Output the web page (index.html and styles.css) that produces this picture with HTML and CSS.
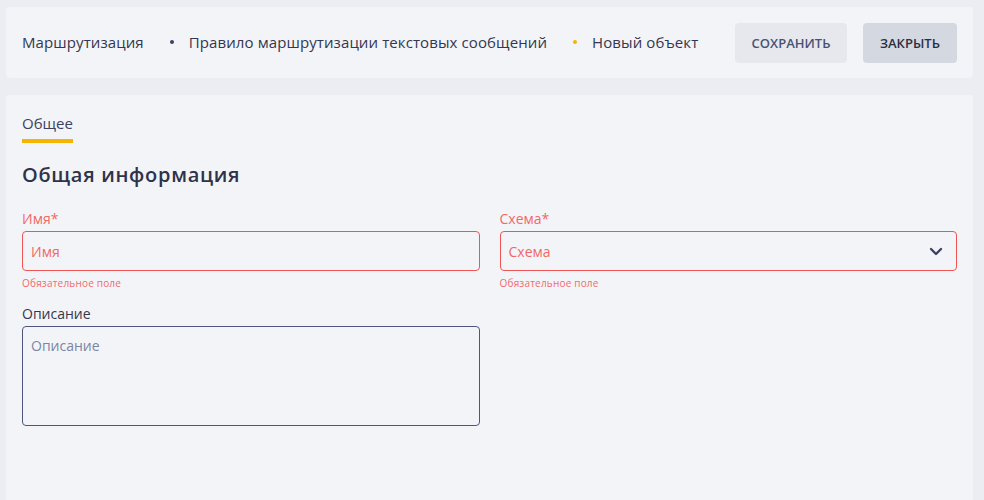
FILE: index.html
```html
<!DOCTYPE html>
<html lang="ru">
<head>
    <meta charset="UTF-8">
    <meta name="viewport" content="width=device-width, initial-scale=1.0">
    <title>Новый объект</title>
    <link rel="stylesheet" href="styles.css">
</head>
<body>
    <!-- ШАПКА -->
    <div class="header">
        <div class="crumbs">
            <span class="crumb">Маршрутизация</span>
            <span class="dot"></span>
            <span class="crumb">Правило маршрутизации текстовых сообщений</span>
            <span class="dot dot-new"></span>
            <span class="crumb">Новый объект</span>
        </div>
        <div class="actions">
            <button class="btn btn-save">СОХРАНИТЬ</button>
            <button class="btn btn-close">ЗАКРЫТЬ</button>
        </div>
    </div>

    <!-- ФОРМА -->
    <div class="card">
        <div class="tabs">
            <span class="tab active">Общее</span>
        </div>

        <h2 class="section-title">Общая информация</h2>

        <div class="grid">
            <div class="field invalid">
                <label class="label">Имя*</label>
                <input class="input" type="text" placeholder="Имя">
                <div class="hint">Обязательное поле</div>
            </div>
            <div class="field invalid">
                <label class="label">Схема*</label>
                <div class="select">
                    <span>Схема</span>
                    <svg class="chevron" width="14" height="9" viewBox="0 0 14 9">
                        <path d="M2 2l5 5 5-5" fill="none" stroke="#3d4160" stroke-width="2.4" stroke-linecap="round" stroke-linejoin="round"/>
                    </svg>
                </div>
                <div class="hint">Обязательное поле</div>
            </div>
            <div class="field">
                <label class="label">Описание</label>
                <textarea class="textarea" placeholder="Описание"></textarea>
            </div>
        </div>
    </div>
</body>
</html>
```

FILE: styles.css
```css
/* ОБЩЕЕ */
body {
    margin: 0;
    padding: 7px 11px 0 6px;
    background-color: #ecedf2;
    font-family: 'Open Sans', 'Noto Sans', sans-serif;
    color: #2f3248;
    height: 100vh;
    box-sizing: border-box;
    overflow: hidden;
}

/* ШАПКА */
.header {
    height: 71px;
    background-color: #f3f4f8;
    border-radius: 4px;
    display: flex;
    align-items: center;
    justify-content: space-between;
    padding: 0 16px;
}

.crumbs {
    display: flex;
    align-items: center;
    font-size: 15px;
    letter-spacing: 0.1px;
    color: #33374f;
    margin-top: -1px;
}

.dot {
    width: 4px;
    height: 4px;
    border-radius: 50%;
    background-color: #3d4160;
    margin: 0 15px 0 26px;
}

.dot-new {
    background-color: #f5b400;
}

.actions {
    display: flex;
    gap: 16px;
}

.btn {
    height: 40px;
    border: none;
    border-radius: 4px;
    font-family: inherit;
    font-size: 13px;
    font-weight: 600;
    padding: 0 16px;
    cursor: pointer;
}

.btn-save {
    width: 112px;
    background-color: #e6e8ed;
    color: #4a5274;
}

.btn-close {
    width: 94px;
    background-color: #d4d8e1;
    color: #2b2f45;
}

/* КАРТОЧКА */
.card {
    margin-top: 17px;
    height: 420px;
    background-color: #f3f4f8;
    border-radius: 4px 4px 0 0;
    padding: 0 16px;
}

.tabs {
    display: flex;
    padding-top: 18px;
}

.tab {
    font-size: 15px;
    color: #3d4160;
    padding-bottom: 6px;
    border-bottom: 4px solid #f5b400;
}

.section-title {
    margin: 18px 0 21px;
    font-size: 20px;
    font-weight: 600;
    letter-spacing: 0.7px;
    color: #2f3248;
}

.grid {
    display: grid;
    grid-template-columns: 1fr 1fr;
    column-gap: 20px;
    row-gap: 14px;
}

.field {
    display: flex;
    flex-direction: column;
}

.label {
    font-size: 14px;
    color: #33374f;
    margin-bottom: 3px;
}

.input,
.select,
.textarea {
    box-sizing: border-box;
    width: 100%;
    border: 1px solid #4e557f;
    border-radius: 4px;
    background: transparent;
    font-family: inherit;
    font-size: 14px;
    padding: 0 8px;
    color: #2f3248;
    outline: none;
}

.input,
.select {
    height: 40px;
}

.select {
    display: flex;
    align-items: center;
    justify-content: space-between;
    padding-right: 13px;
}

.textarea {
    height: 100px;
    padding-top: 9px;
    resize: none;
}

.textarea::placeholder {
    color: #7c86a2;
}

.hint {
    font-size: 10px;
    letter-spacing: 0.2px;
    margin-top: 5px;
    color: #f06b6b;
}

/* ОШИБКА */
.invalid .label,
.invalid .select,
.invalid .input::placeholder {
    color: #f06868;
}

.invalid .input,
.invalid .select {
    border-color: #f05555;
}
```
